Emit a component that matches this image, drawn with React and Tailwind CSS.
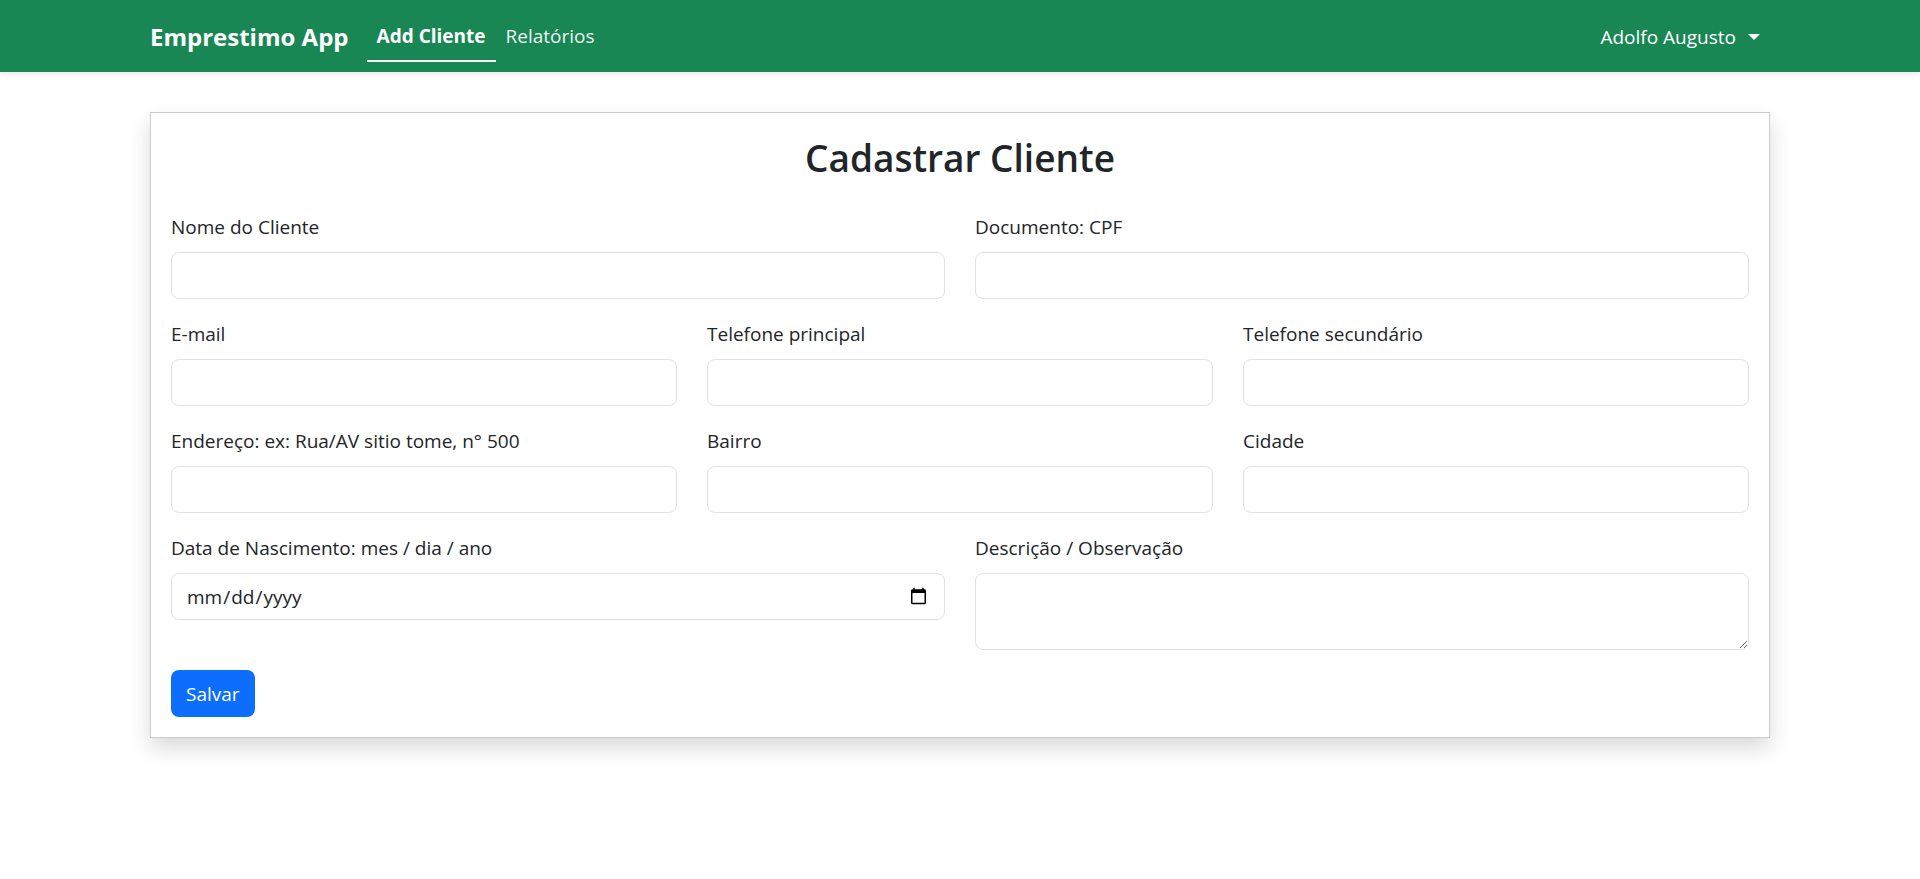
const control =
  "block w-full rounded-lg border border-[#dee2e6] bg-white px-3.5 py-2 leading-[30px] text-[#212529] outline-none focus:border-[#86b7fe]";

function Field({ id, label, type = "text" }) {
  return (
    <div>
      <label htmlFor={id} className="mb-2.5 block">
        {label}
      </label>
      {type === "textarea" ? (
        <textarea id={id} name={id} className={`${control} h-[77px] min-h-[47px] resize-y`} />
      ) : (
        <input id={id} name={id} type={type} className={`${control} h-[47px]`} />
      )}
    </div>
  );
}

function Navbar() {
  return (
    <header className="relative bg-[#198754] text-white shadow-[0_3px_5px_rgba(0,0,0,0.075)]">
      <nav className="mx-auto flex h-[72px] w-full max-w-[1620px] items-center justify-between">
        <div className="flex items-center gap-[18px]">
          <a href="#" className="pt-0.5 text-2xl leading-9 font-bold">
            Emprestimo App
          </a>
          <ul className="flex items-center">
            <li>
              <a
                href="#"
                aria-current="page"
                className="block border-b-2 border-white px-2.5 pt-[11px] pb-[9px] font-bold"
              >
                Add Cliente
              </a>
            </li>
            <li>
              <a
                href="#"
                className="block border-b-2 border-transparent px-2.5 pt-[11px] pb-[9px] text-white/95"
              >
                Relatórios
              </a>
            </li>
          </ul>
        </div>
        <button
          type="button"
          aria-haspopup="menu"
          className="flex items-center gap-3 px-2.5 pt-[11px] pb-[9px]"
        >
          Adolfo Augusto
          <svg width="12" height="6" viewBox="0 0 12 6" fill="currentColor" aria-hidden="true">
            <path d="M0 0H12L6 6Z" />
          </svg>
        </button>
      </nav>
    </header>
  );
}

export default function App() {
  return (
    <div className="bg-white pb-12 font-['Open_Sans','Noto_Sans',sans-serif] text-[19px] leading-[30px] text-[#212529]">
      <Navbar />
      <main className="mx-auto mt-10 w-full max-w-[1620px] border border-[#cccccc] bg-white p-5 shadow-[0_10px_20px_rgba(0,0,0,0.15)]">
        <h1 className="mb-[29px] text-center text-[37px] leading-[50px] font-semibold">
          Cadastrar Cliente
        </h1>
        <form className="flex flex-col gap-5">
          <div className="grid grid-cols-2 gap-[30px]">
            <Field id="nome" label="Nome do Cliente" />
            <Field id="documento" label="Documento: CPF" />
          </div>
          <div className="grid grid-cols-3 gap-[30px]">
            <Field id="email" label="E-mail" type="email" />
            <Field id="telefone1" label="Telefone principal" type="tel" />
            <Field id="telefone2" label="Telefone secundário" type="tel" />
          </div>
          <div className="grid grid-cols-3 gap-[30px]">
            <Field id="endereco" label="Endereço: ex: Rua/AV sitio tome, n° 500" />
            <Field id="bairro" label="Bairro" />
            <Field id="cidade" label="Cidade" />
          </div>
          <div className="grid grid-cols-2 gap-[30px]">
            <Field id="nascimento" label="Data de Nascimento: mes / dia / ano" type="date" />
            <Field id="descricao" label="Descrição / Observação" type="textarea" />
          </div>
          <button
            type="submit"
            className="h-[47px] self-start rounded-lg bg-[#0d6efd] px-[15px] text-white hover:bg-[#0b5ed7]"
          >
            Salvar
          </button>
        </form>
      </main>
    </div>
  );
}
